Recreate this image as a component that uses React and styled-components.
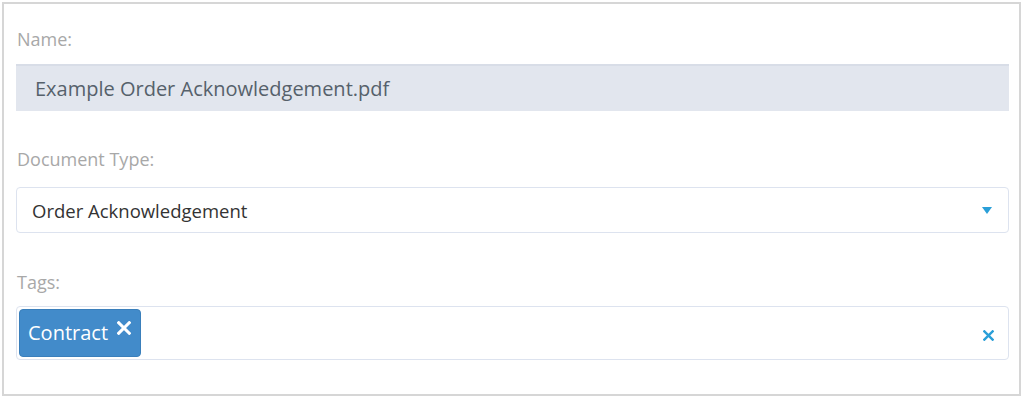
import React from 'react';
import styled, { createGlobalStyle } from 'styled-components';

const GlobalStyle = createGlobalStyle`
  body {
    margin: 0;
    background: #fff;
    font-family: "Open Sans", "Liberation Sans", sans-serif;
  }
`;

const Cross = ({ size, weight }) => (
  <svg width={size} height={size} viewBox="0 0 12 12">
    <path d="M1.5 1.5 L10.5 10.5 M10.5 1.5 L1.5 10.5" stroke="currentColor" strokeWidth={weight} strokeLinecap="square" />
  </svg>
);

function App() {
  return (
    <>
      <GlobalStyle />
      <Panel>
        <Group $gap={14}>
          <Label>Name:</Label>
          <NameField>Example Order Acknowledgement.pdf</NameField>
        </Group>

        <Group $gap={17} $top={37}>
          <Label>Document Type:</Label>
          <SelectBox>
            <SelectValue>Order Acknowledgement</SelectValue>
            <Caret />
          </SelectBox>
        </Group>

        <Group $gap={13} $top={38}>
          <Label>Tags:</Label>
          <TagsBox>
            <Chip>
              Contract
              <ChipRemove>
                <Cross size={14} weight={2.6} />
              </ChipRemove>
            </Chip>
            <ClearAll>
              <Cross size={11} weight={2.6} />
            </ClearAll>
          </TagsBox>
        </Group>
      </Panel>
    </>
  );
}

const Panel = styled.div`
  margin: 2px 3px 0 2px;
  width: 1019px;
  height: 394px;
  border: 2px solid #d6d6d6;
  padding: 24px 10px 0 12px;
  box-sizing: border-box;
  display: flex;
  flex-direction: column;
`;

const Group = styled.div`
  display: flex;
  flex-direction: column;
  gap: ${(p) => p.$gap}px;
  margin-top: ${(p) => p.$top || 0}px;
`;

const Label = styled.div`
  font-size: 18px;
  line-height: 22px;
  color: #a8a8a8;
  padding-left: 1px;
`;

const NameField = styled.div`
  height: 47px;
  box-sizing: border-box;
  background: #e2e6ee;
  border-top: 2px solid #d8dde7;
  padding: 0 19px;
  display: flex;
  align-items: center;
  font-size: 20px;
  color: #56616b;
`;

const SelectBox = styled.div`
  height: 46px;
  box-sizing: border-box;
  border: 1px solid #dde3ef;
  border-radius: 4px;
  padding: 0 15px;
  display: flex;
  align-items: center;
  justify-content: space-between;
`;

const SelectValue = styled.span`
  font-size: 18.5px;
  color: #333;
`;

const Caret = styled.span`
  width: 0;
  height: 0;
  border-left: 5px solid transparent;
  border-right: 5px solid transparent;
  border-top: 7px solid #2a9fd8;
  margin-right: 1px;
`;

const TagsBox = styled.div`
  height: 54px;
  box-sizing: border-box;
  border: 1px solid #dde3ef;
  border-radius: 4px;
  padding: 2px 14px 2px 2px;
  display: flex;
  align-items: center;
  justify-content: space-between;
`;

const Chip = styled.div`
  height: 48px;
  box-sizing: border-box;
  background: #428bca;
  border: 1px solid #3a7fbb;
  border-radius: 4px;
  padding: 0 9px 2px 8px;
  display: flex;
  align-items: center;
  gap: 9px;
  font-size: 20px;
  color: #fff;
`;

const ChipRemove = styled.span`
  display: flex;
  align-self: flex-start;
  margin-top: 11px;
`;

const ClearAll = styled.span`
  display: flex;
  color: #2a9fd8;
  margin-top: 4px;
`;

export default App;
